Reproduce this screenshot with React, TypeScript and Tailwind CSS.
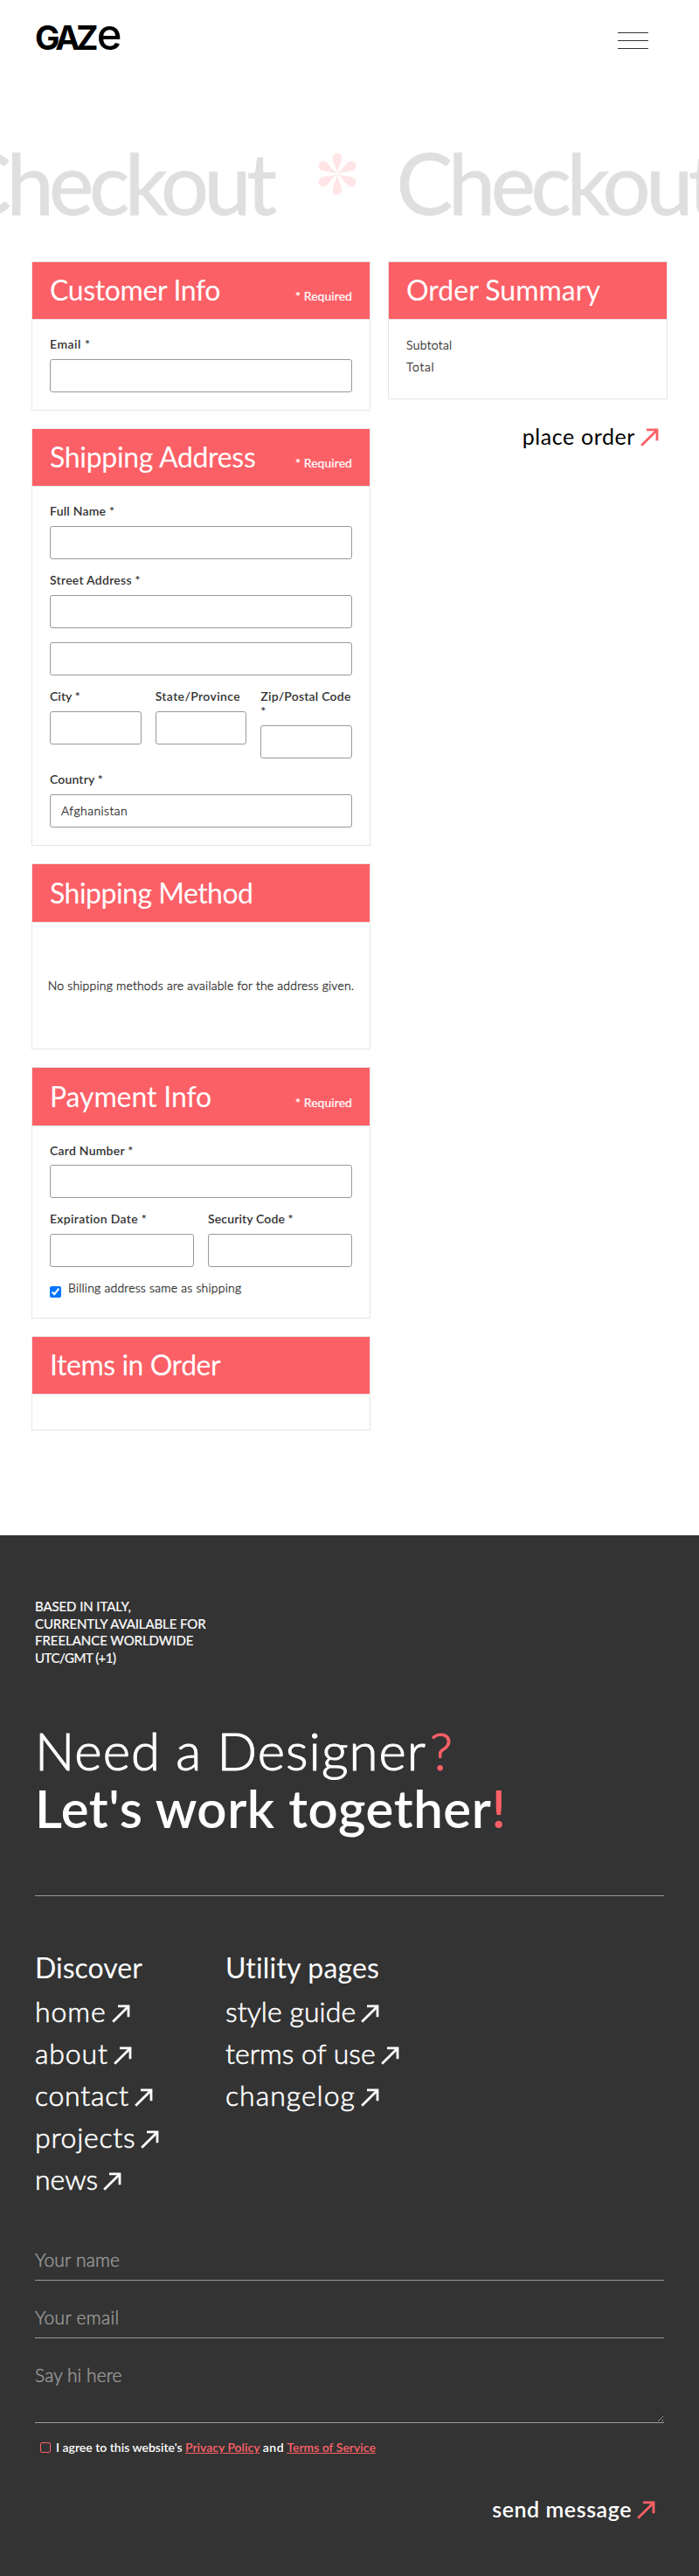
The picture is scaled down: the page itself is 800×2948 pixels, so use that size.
import React from 'react';

function Arrow({ className = '' }: { className?: string }) {
  return (
    <svg className={`h-[21px] w-[21px] shrink-0 ${className}`} viewBox="0 0 21 21" fill="none" stroke="currentColor" strokeWidth="2.8">
      <path d="M1.2 19.8L18.6 2.4" />
      <path d="M7 1.9H19V14.2" />
    </svg>
  );
}

function Marquee() {
  return (
    <div className="flex w-[505.6px] shrink-0 items-start">
      <span className="w-[416px] shrink-0 text-[97px] leading-[100px] tracking-[-5.4px] text-[#dfdfdf] [-webkit-text-stroke:0.8px_#dfdfdf]">Checkout</span>
      <svg className="mt-[16.5px] h-12 w-11 shrink-0 fill-[#ffe5e6]" viewBox="-22 -24 44 48">
        {[0, 60, 120, 180, 240, 300].map((angle) => (
          <path key={angle} transform={`rotate(${angle})`} d="M0 0C-1-8-5.3-13-5.3-18.7A5.3 5.3 0 0 1 5.3-18.7C5.3-13 1-8 0 0Z" />
        ))}
      </svg>
    </div>
  );
}

type CardProps = {
  title: string;
  tracking: string;
  required?: boolean;
  className?: string;
  children?: React.ReactNode;
};

function Card({ title, tracking, required, className = '', children }: CardProps) {
  return (
    <section className={`border border-[#e6e6e6] bg-white ${className}`}>
      <header className="box-content flex h-[65.4px] items-baseline justify-between border-b border-[#e6e6e6] bg-[#fc6067] px-5 text-white">
        <h2 className={`pt-[13.4px] text-[32px] leading-[38.4px] ${tracking}`}>{title}</h2>
        {required && <span className="text-sm tracking-[0.06px] [-webkit-text-stroke:0.2px]">* Required</span>}
      </header>
      {children}
    </section>
  );
}

function Field({ label, tracking = '', value }: { label?: string; tracking?: string; value?: string }) {
  return (
    <div className="min-w-0 flex-1">
      {label && <label className={`mb-2 block text-sm leading-[16.8px] font-semibold ${tracking}`}>{label}</label>}
      <div className="flex h-[38px] items-center rounded-[3px] border border-[#999] px-3 text-sm font-light tracking-[0.45px] [-webkit-text-stroke:0.35px]">
        {value}
      </div>
    </div>
  );
}

function FooterLink({ label, tracking }: { label: string; tracking: string }) {
  return (
    <a className="flex h-12 items-center gap-[6px]">
      <span className={`text-[32px] leading-[48px] font-light [-webkit-text-stroke:0.6px] ${tracking}`}>{label}</span>
      <Arrow className="mt-[6px]" />
    </a>
  );
}

export default function App() {
  return (
    <div className="w-[800px] bg-white font-[Lato,sans-serif] text-[#333]">
      <div className="h-[1757px] overflow-hidden">
        <nav className="flex h-[158.5px] items-start justify-between pr-[58px] pl-10">
          <a className="flex h-[61px] items-baseline pt-[8px] font-[Inter,sans-serif] leading-[64px] text-black">
            <span className="text-[38px] font-bold tracking-[-4.2px]">GAZ</span>
            <span className="ml-[2.5px] text-[49px] font-medium">e</span>
          </a>
          <div className="mt-[37px] flex w-[35px] flex-col gap-2">
            <span className="h-px bg-[#333]" />
            <span className="h-px bg-[#333]" />
            <span className="h-px bg-[#333]" />
          </div>
        </nav>

        <div className="-ml-[52px] flex h-[140.1px]">
          <Marquee />
          <Marquee />
        </div>

        <main className="flex items-start gap-5 px-9">
          <div className="flex w-[388px] flex-col gap-5">
            <Card title="Customer Info" tracking="tracking-[-0.37px]" required>
              <div className="p-5">
                <Field label="Email *" tracking="tracking-[0.5px]" />
              </div>
            </Card>

            <Card title="Shipping Address" tracking="tracking-[-0.32px]" required>
              <div className="flex flex-col gap-4 p-5">
                <Field label="Full Name *" tracking="tracking-[0.23px]" />
                <Field label="Street Address *" tracking="tracking-[0.26px]" />
                <Field />
                <div className="flex gap-4">
                  <Field label="City *" tracking="tracking-[0.06px]" />
                  <Field label="State/Province" tracking="tracking-[0.37px]" />
                  <Field label="Zip/Postal Code *" tracking="tracking-[0.22px]" />
                </div>
                <Field label="Country *" tracking="tracking-[0.15px]" value="Afghanistan" />
              </div>
            </Card>

            <Card title="Shipping Method" tracking="tracking-[-0.52px]" className="h-[213px]">
              <div className="flex h-[145px] items-center justify-center text-sm font-light tracking-[0.2px] whitespace-nowrap [-webkit-text-stroke:0.35px]">
                No shipping methods are available for the address given.
              </div>
            </Card>

            <Card title="Payment Info" tracking="tracking-[-0.11px]" required className="h-[287.7px]">
              <div className="flex flex-col gap-4 p-5">
                <Field label="Card Number *" tracking="tracking-[0.23px]" />
                <div className="flex gap-4">
                  <Field label="Expiration Date *" tracking="tracking-[0.3px]" />
                  <Field label="Security Code *" tracking="tracking-[0.13px]" />
                </div>
                <label className="flex items-start gap-2 text-sm leading-4 font-light tracking-[0.22px] [-webkit-text-stroke:0.35px]">
                  <input type="checkbox" defaultChecked className="mt-[6px] h-[13px] w-[13px]" />
                  Billing address same as shipping
                </label>
              </div>
            </Card>

            <Card title="Items in Order" tracking="tracking-[-0.46px]">
              <div className="h-10" />
            </Card>
          </div>

          <div className="w-80">
            <Card title="Order Summary" tracking="tracking-normal" className="h-[158px]">
              <div className="p-5 text-sm leading-[17px] font-light [-webkit-text-stroke:0.35px]">
                <p className="mb-2 tracking-[0.33px]">Subtotal</p>
                <p className="tracking-[0.72px]">Total</p>
              </div>
            </Card>
            <a className="mt-[27px] mr-[10px] flex items-center justify-end gap-[6px] text-[25px] leading-[30px] tracking-[0.6px] text-black">
              place order
              <Arrow className="mt-1 text-[#fc6067]" />
            </a>
          </div>
        </main>
      </div>

      <footer className="h-[1191px] bg-[#333] px-10 pt-[72px] text-white">
        <div className="text-[15px] leading-[19.5px] [-webkit-text-stroke:0.2px]">
          <p className="tracking-[-0.1px]">BASED IN ITALY,</p>
          <p className="tracking-[-0.1px]">CURRENTLY AVAILABLE FOR</p>
          <p className="tracking-[-0.05px]">FREELANCE WORLDWIDE</p>
          <p className="tracking-[-0.51px]">UTC/GMT (+1)</p>
        </div>

        <h1 className="mt-[63px] text-[60px] leading-[66px]">
          <span className="block font-light tracking-[1px] [-webkit-text-stroke:1.1px]">
            Need a Designer<span className="ml-1 text-[#fc6067]">?</span>
          </span>
          <span className="block font-semibold tracking-[0.54px]">
            Let's work together<span className="text-[#fc6067]">!</span>
          </span>
        </h1>

        <div className="mt-[67px] h-px bg-[#999]" />

        <div className="mt-[57.5px] flex">
          <div className="w-[218px]">
            <h3 className="h-[50px] text-[32px] leading-[48px]">Discover</h3>
            <FooterLink label="home" tracking="tracking-[0.93px]" />
            <FooterLink label="about" tracking="tracking-[0.86px]" />
            <FooterLink label="contact" tracking="tracking-[0.74px]" />
            <FooterLink label="projects" tracking="tracking-[0.75px]" />
            <FooterLink label="news" tracking="tracking-[-0.04px]" />
          </div>
          <div>
            <h3 className="h-[50px] text-[32px] leading-[48px] tracking-[0.17px]">Utility pages</h3>
            <FooterLink label="style guide" tracking="tracking-[0.08px]" />
            <FooterLink label="terms of use" tracking="tracking-[0.02px]" />
            <FooterLink label="changelog" tracking="tracking-[1px]" />
          </div>
        </div>

        <form className="mt-[44.5px] flex flex-col gap-[18px]">
          <input
            className="h-12 border-b border-[#999] text-[21px] font-light tracking-[0.15px] [-webkit-text-stroke:0.45px] placeholder:text-[#999]"
            placeholder="Your name"
          />
          <input
            className="h-12 border-b border-[#999] text-[21px] font-light tracking-[0.28px] [-webkit-text-stroke:0.45px] placeholder:text-[#999]"
            placeholder="Your email"
          />
          <textarea
            className="h-[79px] resize border-b border-[#999] pt-3 text-[21px] leading-6 font-light tracking-[0.05px] [-webkit-text-stroke:0.45px] placeholder:text-[#999]"
            placeholder="Say hi here"
          />
          <label className="ml-[6px] flex h-5 items-center gap-[6px] text-sm leading-5 font-semibold">
            <span className="h-3 w-3 rounded-xs border border-[#fc6067]" />
            <span>
              I agree to this website's <a className="text-[#fc6067] underline">Privacy Policy</a> <span className="tracking-[0.6px]">and</span>{' '}
              <a className="text-[#fc6067] underline">Terms of Service</a>
            </span>
          </label>
        </form>

        <button type="button" className="mt-[45px] mr-[10px] ml-auto flex items-center gap-[6px] text-[25px] leading-[30px] font-semibold tracking-[0.55px]">
          send message
          <Arrow className="mt-[3px] text-[#fc6067]" />
        </button>
      </footer>
    </div>
  );
}
